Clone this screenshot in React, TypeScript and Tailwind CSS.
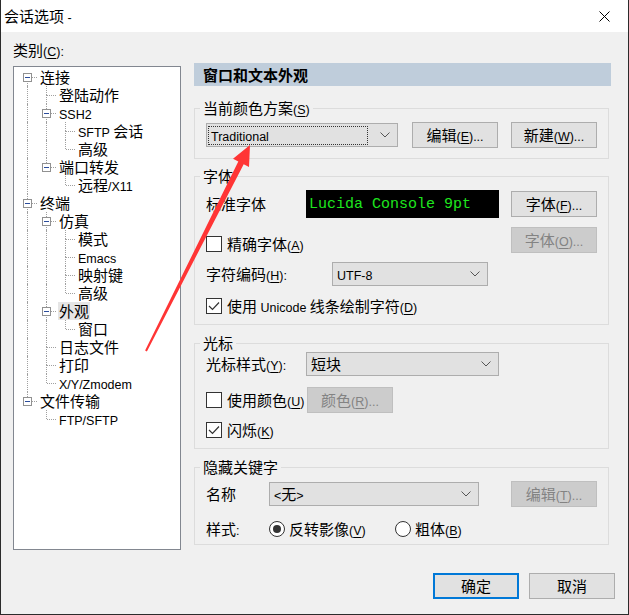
import React from "react";

const CJK = /[\u2E80-\u9FFF\u3000-\u303F\uFF00-\uFFEF]/;

type Run = { text: string; cjk: boolean; u: boolean };

function splitRuns(s: string): Run[] {
  const runs: Run[] = [];
  for (let i = 0; i < s.length; i++) {
    let ch = s[i];
    let u = false;
    if (ch === "&" && i + 1 < s.length) {
      i++;
      ch = s[i];
      u = true;
    }
    const cjk = CJK.test(ch);
    const last = runs[runs.length - 1];
    if (last && !u && !last.u && last.cjk === cjk) last.text += ch;
    else runs.push({ text: ch, cjk, u });
  }
  return runs;
}

// mixed text: CJK glyphs are bigger than the latin ones, like the dialog font
function Txt({ s, bold }: { s: string; bold?: boolean }) {
  return (
    <span className={bold ? "font-bold whitespace-nowrap" : "whitespace-nowrap"}>
      {splitRuns(s).map((r, i) => (
        <span
          key={i}
          className={
            (r.cjk
              ? "font-['Noto_Sans_CJK_SC',sans-serif] text-[15px]"
              : "font-['Liberation_Sans',sans-serif] text-[12.5px]") +
            (r.u ? " underline underline-offset-2" : "")
          }
        >
          {r.text}
        </span>
      ))}
    </span>
  );
}

function Btn({ s, disabled, primary }: { s: string; disabled?: boolean; primary?: boolean }) {
  let cls = "h-[26px] w-[86px] shrink-0 flex items-center justify-center leading-none ";
  if (primary) cls += "border-2 border-[#0078d7] bg-[#e1e1e1] text-black";
  else if (disabled) cls += "border border-[#bfbfbf] bg-[#cccccc] text-[#838383]";
  else cls += "border border-[#adadad] bg-[#e1e1e1] text-black";
  return (
    <div className={cls}>
      <Txt s={s} />
    </div>
  );
}

function Chevron() {
  return (
    <svg width="10" height="6" viewBox="0 0 10 6" className="shrink-0">
      <polyline points="0.5,0.5 5,5 9.5,0.5" fill="none" stroke="#555" strokeWidth="1" />
    </svg>
  );
}

function Combo({ s, w, focus }: { s: string; w: string; focus?: boolean }) {
  return (
    <div className={`${w} h-[24px] shrink-0 flex items-center border border-[#adadad] bg-[#e1e1e1] pr-[7px]`}>
      <div
        className={
          "flex-1 h-[19px] flex items-center ml-[1px] mr-[12px] pl-[2px] leading-none " +
          (focus ? "border border-dotted border-[#333]" : "border border-transparent")
        }
      >
        <Txt s={s} />
      </div>
      <Chevron />
    </div>
  );
}

function Check({ s, checked }: { s: string; checked?: boolean }) {
  return (
    <div className="flex items-center gap-[5px] h-[18px] leading-none">
      <div className="w-[16px] h-[16px] shrink-0 border border-[#333] bg-white flex items-center justify-center">
        {checked && (
          <svg width="12" height="10" viewBox="0 0 12 10">
            <polyline points="1,5 4.5,8.5 11,1.5" fill="none" stroke="#333" strokeWidth="1.2" />
          </svg>
        )}
      </div>
      <Txt s={s} />
    </div>
  );
}

function Radio({ s, checked }: { s: string; checked?: boolean }) {
  return (
    <div className="flex items-center gap-[4px] h-[18px] leading-none">
      <div className="w-[16px] h-[16px] shrink-0 rounded-full border border-[#333] bg-white flex items-center justify-center">
        {checked && <div className="w-[8px] h-[8px] rounded-full bg-[#333]" />}
      </div>
      <Txt s={s} />
    </div>
  );
}

function Group({ title, mt, pb, children }: { title: string; mt: string; pb: string; children: React.ReactNode }) {
  return (
    <fieldset className={`${mt} ${pb} w-[415px] border border-[#dcdcdc]`}>
      <legend className="ml-[5px] px-[3px] h-[18px] leading-[18px]">
        <Txt s={title} />
      </legend>
      <div className="px-[11px]">{children}</div>
    </fieldset>
  );
}

type Node = { t: string; l: number; box?: boolean; sel?: boolean };

const tree: Node[] = [
  { t: "连接", l: 0, box: true },
  { t: "登陆动作", l: 1 },
  { t: "SSH2", l: 1, box: true },
  { t: "SFTP 会话", l: 2 },
  { t: "高级", l: 2 },
  { t: "端口转发", l: 1, box: true },
  { t: "远程/X11", l: 2 },
  { t: "终端", l: 0, box: true },
  { t: "仿真", l: 1, box: true },
  { t: "模式", l: 2 },
  { t: "Emacs", l: 2 },
  { t: "映射键", l: 2 },
  { t: "高级", l: 2 },
  { t: "外观", l: 1, box: true, sel: true },
  { t: "窗口", l: 2 },
  { t: "日志文件", l: 1 },
  { t: "打印", l: 1 },
  { t: "X/Y/Zmodem", l: 1 },
  { t: "文件传输", l: 0, box: true },
  { t: "FTP/SFTP", l: 1 },
];

// does the line at level `a` carry on below row i
function continues(i: number, a: number) {
  for (let j = i + 1; j < tree.length; j++) {
    if (tree[j].l <= a) return tree[j].l === a;
  }
  return false;
}

function TreeRow({ n, i }: { n: Node; i: number }) {
  const cols = [];
  for (let a = 0; a <= n.l; a++) {
    const own = a === n.l;
    const down = continues(i, a);
    const up = own && (n.l > 0 || i > 0);
    cols.push(
      <div key={a} className="relative w-[19px] h-full shrink-0">
        {!own && down && <div className="absolute left-[9px] top-0 bottom-0 border-l border-dotted border-[#a0a0a0]" />}
        {own && up && <div className="absolute left-[9px] top-0 h-[9px] border-l border-dotted border-[#a0a0a0]" />}
        {own && down && <div className="absolute left-[9px] top-[9px] bottom-0 border-l border-dotted border-[#a0a0a0]" />}
        {own && <div className="absolute left-[10px] right-0 top-[9px] border-t border-dotted border-[#a0a0a0]" />}
        {own && n.box && (
          <div className="absolute left-[5px] top-[5px] w-[9px] h-[9px] border border-[#919191] bg-white flex items-center justify-center">
            <div className="w-[5px] h-[1px] bg-[#2c4d9c]" />
          </div>
        )}
      </div>
    );
  }
  return (
    <div className="flex h-[18px] items-center">
      {cols}
      <div className={"ml-[2px] px-[1px] h-[18px] flex items-center leading-none " + (n.sel ? "bg-[#e5e5e5]" : "")}>
        <Txt s={n.t} />
      </div>
    </div>
  );
}

export default function App() {
  return (
    <div className="relative w-[629px] h-[615px] bg-[#f0f0f0] border-x border-b border-[#2b2b2b] text-black overflow-hidden">
      {/* title bar */}
      <div className="h-[32px] bg-white flex items-center justify-between pl-[3px] pr-[18px] leading-none">
        <Txt s="会话选项 -" />
        <svg width="11" height="11" viewBox="0 0 11 11">
          <path d="M0.5 0.5 L10.5 10.5 M10.5 0.5 L0.5 10.5" stroke="#000" strokeWidth="1" />
        </svg>
      </div>

      <div className="pt-[8px] pl-[12px]">
        <div className="flex">
          {/* category tree */}
          <div className="w-[168px] shrink-0">
            <div className="h-[20px] flex items-center leading-none">
              <Txt s="类别(&C):" />
            </div>
            <div className="mt-[6px] h-[484px] border border-[#828790] bg-white pt-[1px] pl-[4px]">
              {tree.map((n, i) => (
                <TreeRow key={i} n={n} i={i} />
              ))}
            </div>
          </div>

          {/* settings */}
          <div className="ml-[13px] w-[417px] pt-[23px] flex flex-col">
            <div className="h-[23px] bg-[#bfcddb] pl-[9px] flex items-center leading-none">
              <Txt s="窗口和文本外观" bold />
            </div>

            <Group title="当前颜色方案(&S)" mt="mt-[13px]" pb="pb-[10px]">
              <div className="mt-[5px] flex items-center h-[26px]">
                <Combo s="Traditional" w="w-[192px]" focus />
                <div className="ml-[14px]">
                  <Btn s="编辑(&E)..." />
                </div>
                <div className="ml-auto">
                  <Btn s="新建(&W)..." />
                </div>
              </div>
            </Group>

            <Group title="字体" mt="mt-[8px]" pb="pb-[9px]">
              <div className="mt-[5px] flex items-center h-[28px]">
                <div className="w-[100px] leading-none">
                  <Txt s="标准字体" />
                </div>
                <div className="w-[193px] h-[28px] bg-black flex items-center pl-[3px] font-['Liberation_Mono',monospace] text-[15px] text-[#1ee61e] leading-none">
                  Lucida Console 9pt
                </div>
                <div className="ml-auto">
                  <Btn s="字体(&F)..." />
                </div>
              </div>
              <div className="mt-[9px] flex h-[26px]">
                <div className="self-end">
                  <Check s="精确字体(&A)" />
                </div>
                <div className="ml-auto">
                  <Btn s="字体(&O)..." disabled />
                </div>
              </div>
              <div className="mt-[9px] flex items-center h-[24px]">
                <div className="w-[126px] leading-none">
                  <Txt s="字符编码(&H):" />
                </div>
                <Combo s="UTF-8" w="w-[156px]" />
              </div>
              <div className="mt-[11px]">
                <Check s="使用 Unicode 线条绘制字符(&D)" checked />
              </div>
            </Group>

            <Group title="光标" mt="mt-[9px]" pb="pb-[9px]">
              <div className="flex items-center h-[24px]">
                <div className="w-[100px] leading-none">
                  <Txt s="光标样式(&Y):" />
                </div>
                <Combo s="短块" w="w-[193px]" />
              </div>
              <div className="mt-[11px] flex items-center h-[26px]">
                <div className="w-[99px] overflow-hidden">
                  <Check s="使用颜色(&U)" />
                </div>
                <div className="ml-[2px]">
                  <Btn s="颜色(&R)..." disabled />
                </div>
              </div>
              <div className="mt-[8px]">
                <Check s="闪烁(&K)" checked />
              </div>
            </Group>

            <Group title="隐藏关键字" mt="mt-[9px]" pb="pb-[6px]">
              <div className="mt-[5px] flex items-center h-[26px]">
                <div className="w-[63px] leading-none">
                  <Txt s="名称" />
                </div>
                <Combo s="<无>" w="w-[210px]" />
                <div className="ml-auto">
                  <Btn s="编辑(&T)..." disabled />
                </div>
              </div>
              <div className="mt-[13px] flex items-center h-[18px]">
                <div className="w-[63px] leading-none">
                  <Txt s="样式:" />
                </div>
                <div className="w-[126px]">
                  <Radio s="反转影像(&V)" checked />
                </div>
                <Radio s="粗体(&B)" />
              </div>
            </Group>
          </div>
        </div>

        {/* dialog buttons */}
        <div className="mt-[23px] flex justify-end gap-[10px] pr-[13px]">
          <Btn s="确定" primary />
          <Btn s="取消" />
        </div>
      </div>

      {/* red annotation arrow */}
      <svg className="absolute left-0 top-0 pointer-events-none" width="629" height="615" viewBox="0 0 629 615">
        <polygon
          points="144.1,350.6 237.3,161.5 232,158.8 249,145 248,167 242.7,164.2 145.9,351.4"
          fill="#ff3535"
        />
      </svg>
    </div>
  );
}
